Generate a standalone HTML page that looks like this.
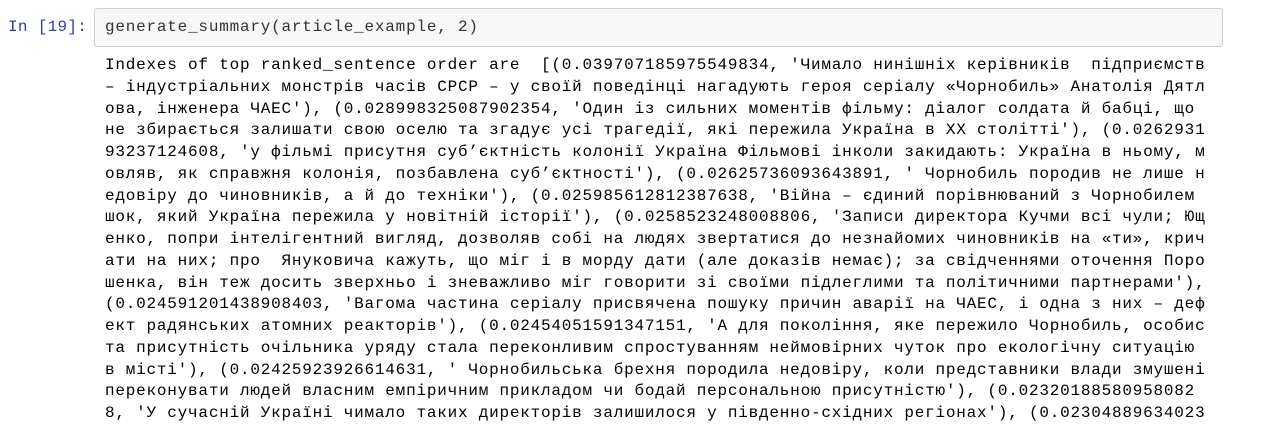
<!DOCTYPE html>
<html><head><meta charset="utf-8"><style>
body{margin:0;background:#fff;width:1280px;height:432px;overflow:hidden;}
.prompt{position:absolute;left:8px;top:15px;font:16px/24px "Liberation Mono","DejaVu Sans Mono",monospace;color:#303F9F;letter-spacing:0.3px;z-index:2;}
.inbox{position:absolute;left:94px;top:8px;width:1127px;height:37px;background:#f7f7f7;border:1px solid #cfcfcf;border-radius:3px;}
.code{position:absolute;left:105px;top:15px;font:16px/24px "Liberation Mono","DejaVu Sans Mono",monospace;letter-spacing:0.78px;color:#333;white-space:pre;}
.out{position:absolute;left:105px;top:55px;font:16px/21.75px "Liberation Mono","DejaVu Sans Mono",monospace;letter-spacing:0.78px;color:#000;white-space:pre;margin:0;}
</style></head><body>
<div class="inbox"></div>
<div class="prompt">In [19]:</div>
<div class="code">generate_summary(article_example, 2)</div>
<pre class="out">Indexes of top ranked_sentence order are  [(0.039707185975549834, 'Чимало нинішніх керівників  підприємств
– індустріальних монстрів часів СРСР – у своїй поведінці нагадують героя серіалу «Чорнобиль» Анатолія Дятл
ова, інженера ЧАЕС'), (0.028998325087902354, 'Один із сильних моментів фільму: діалог солдата й бабці, що 
не збирається залишати свою оселю та згадує усі трагедії, які пережила Україна в ХХ столітті'), (0.0262931
93237124608, 'у фільмі присутня суб’єктність колонії Україна Фільмові інколи закидають: Україна в ньому, м
овляв, як справжня колонія, позбавлена суб’єктності'), (0.02625736093643891, ' Чорнобиль породив не лише н
едовіру до чиновників, а й до техніки'), (0.025985612812387638, 'Війна – єдиний порівнюваний з Чорнобилем 
шок, який Україна пережила у новітній історії'), (0.0258523248008806, 'Записи директора Кучми всі чули; Ющ
енко, попри інтелігентний вигляд, дозволяв собі на людях звертатися до незнайомих чиновників на «ти», крич
ати на них; про  Януковича кажуть, що міг і в морду дати (але доказів немає); за свідченнями оточення Поро
шенка, він теж досить зверхньо і зневажливо міг говорити зі своїми підлеглими та політичними партнерами'),
(0.024591201438908403, 'Вагома частина серіалу присвячена пошуку причин аварії на ЧАЕС, і одна з них – деф
ект радянських атомних реакторів'), (0.02454051591347151, 'А для покоління, яке пережило Чорнобиль, особис
та присутність очільника уряду стала переконливим спростуванням неймовірних чуток про екологічну ситуацію 
в місті'), (0.02425923926614631, ' Чорнобильська брехня породила недовіру, коли представники влади змушені
переконувати людей власним емпіричним прикладом чи бодай персональною присутністю'), (0.02320188580958082
8, 'У сучасній Україні чимало таких директорів залишилося у південно-східних регіонах'), (0.02304889634023</pre>
</body></html>
